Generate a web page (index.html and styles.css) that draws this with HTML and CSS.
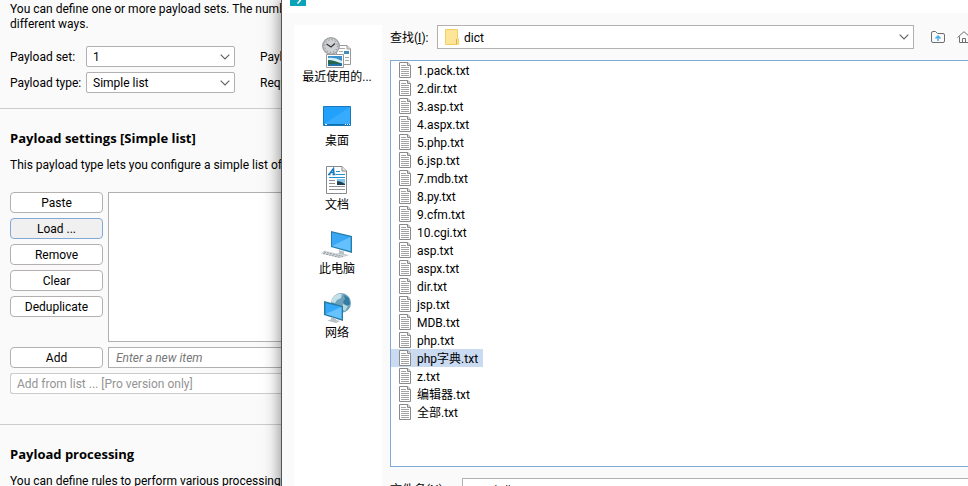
FILE: index.html
```html
<!DOCTYPE html>
<html lang="zh-CN">
<head>
<meta charset="utf-8">
<title>Payloads</title>
<link rel="stylesheet" href="styles.css">
</head>
<body>
<svg class="defs" aria-hidden="true">
  <symbol id="chevron" viewBox="0 0 10 6"><path d="M.7 .7L5 5L9.300 .7" fill="none" stroke="#606060" stroke-width="1.100"/></symbol>
  <symbol id="file" viewBox="0 0 13 16">
    <path d="M.5 .5H9L11.500 3.500V15.500H.5Z" fill="#fff" stroke="#8a8a8a"/>
    <path d="M8.500 .5V3.500H11.500" fill="#ddd" stroke="#8a8a8a"/>
    <path d="M2 3.500H7M2 5.500H10M2 7.500H10M2 9.500H10M2 11.500H10M2 13.500H10" stroke="#a4a4a4"/>
  </symbol>
</svg>
<div class="screen">
  <main class="settings">
    <section class="sets">
      <p class="intro">You can define one or more payload sets. The numb<br>different ways.</p>
      <div class="fields">
        <label for="set">Payload set:</label>
        <div class="combo"><select id="set"><option>1</option></select><svg class="chevron"><use href="#chevron"/></svg></div>
        <span>Payl</span>
        <label for="type">Payload type:</label>
        <div class="combo"><select id="type"><option>Simple list</option></select><svg class="chevron"><use href="#chevron"/></svg></div>
        <span>Requ</span>
      </div>
    </section>
    <section class="simple">
      <h2>Payload settings [Simple list]</h2>
      <p>This payload type lets you configure a simple list of</p>
      <div class="editor">
        <div class="actions">
          <button>Paste</button>
          <button class="focused">Load ...</button>
          <button>Remove</button>
          <button>Clear</button>
          <button>Deduplicate</button>
        </div>
        <textarea aria-label="Payload items"></textarea>
        <button>Add</button>
        <input type="text" placeholder="Enter a new item" aria-label="New item">
        <select class="prolist" aria-label="Add from list" disabled><option>Add from list ... [Pro version only]</option></select>
      </div>
    </section>
    <section class="processing">
      <h2>Payload processing</h2>
      <p>You can define rules to perform various processing t</p>
    </section>
  </main>

  <div class="dialog" role="dialog" aria-label="dict">
    <header class="titlebar">
      <svg class="appicon" viewBox="0 0 16 16"><path d="M0 0H16V16H0Z" fill="#0aa3b8"/><path d="M9 9L10.300 10.500L7.500 13.500" fill="none" stroke="#fff" stroke-width="1.500"/></svg>
    </header>
    <div class="dialog-body">
      <nav class="places">
        <button>
          <svg viewBox="0 0 32 32">
            <path d="M15.500 9.500H26L29.500 13V28.500H15.500Z" fill="#fff" stroke="#999"/>
            <path d="M26 9.500V13H29.500" fill="#ddd" stroke="#999"/>
            <path d="M18 12.500H24M18 15.500H22M18 18.500H22M24 21.500H28M24 24.500H28" stroke="#aaa"/>
            <path d="M23 15H28V18H23Z" fill="#3c8fb8"/>
            <circle cx="10" cy="10" r="8.200" fill="#cfd2d4" stroke="#a2a5a7" stroke-width="1.600"/>
            <circle cx="10" cy="10" r="6.300" fill="none" stroke="#777" stroke-width="1" stroke-dasharray="1 2.300"/>
            <path d="M5.500 8L10 11L14 7.500" fill="none" stroke="#333" stroke-width="1.200"/>
            <path d="M5.500 18.500H22.500V31.500H5.500Z" fill="#fff" stroke="#999"/>
            <path d="M7 20H21V30H7Z" fill="#3a91cf"/>
            <path d="M7 22Q14 21 21 25V27H7Z" fill="#d5eff6"/>
            <path d="M7 24Q13 24 21 28V30H7Z" fill="#24664f"/>
            <path d="M7 28H21V30H7Z" fill="#2471a5"/>
          </svg><span>最近使用的...</span>
        </button>
        <button>
          <svg viewBox="0 0 32 32">
            <path d="M2.500 6.500H29.500V25.500H2.500Z" fill="#21a1fb" stroke="#1878b8"/>
            <path d="M3 24L29 7V24Z" fill="#4db6ff" opacity=".5"/>
            <path d="M3 24.500H29" stroke="#0872bd"/>
            <path d="M4 24.500H6M24 24.500H25M26 24.500H27M28 24.500H29" stroke="#fff"/>
          </svg><span>桌面</span>
        </button>
        <button>
          <svg viewBox="0 0 32 32">
            <path d="M5.500 2.500H21L25.500 7V29.500H5.500Z" fill="#fff" stroke="#858b8f"/>
            <path d="M21 2.500V7H25.500" fill="#e8e8e8" stroke="#858b8f"/>
            <path d="M8 10.500L12.500 4.500L13 10.500M10 8.500H13M7 10.500H9.500M11.500 10.500H14.500" fill="none" stroke="#1979b9" stroke-width="1.500"/>
            <path d="M15 7.500H19M15 10.500H24M8 13.500H24" stroke="#2194cf"/>
            <path d="M8 16.500H14M8 19.500H14M8 22.500H24M8 25.500H24" stroke="#929292"/>
            <path d="M16 15H24V21H16Z" fill="#80c6ed"/>
            <path d="M16 17Q20 17 24 20V21H16Z" fill="#203f51"/>
          </svg><span>文档</span>
        </button>
        <button>
          <svg viewBox="0 0 32 32">
            <path d="M10 3L31 8V25L10 19Z" fill="#277fa8"/>
            <path d="M11 4.500L29.500 9V23L11 18Z" fill="#39a7f4"/>
            <path d="M11 18L29.500 9V23Z" fill="#65c0ff"/>
            <path d="M18 22L23 23.500V26L28 27L24 28.500L14 26L18 25Z" fill="#bac3c9"/>
            <path d="M3 22.500L25 27.500L20 30L0 25.500Z" fill="#d7dbdd"/>
            <path d="M3 24L22 28.500M2 25.500L19 29.500" stroke="#8c969d" stroke-dasharray="2 1"/>
          </svg><span>此电脑</span>
        </button>
        <button>
          <svg viewBox="0 0 32 32">
            <circle cx="20" cy="11" r="10" fill="#6da2ba"/>
            <path d="M12 5Q16 1 21 2L20 6L16 8L14 11L10 10Z" fill="#c3e0e8"/>
            <path d="M23 3L28 6L29 12L25 15L22 10L24 7Z" fill="#347ca4"/>
            <path d="M22 12L27 14L24 19L20 17Z" fill="#b8d8dd"/>
            <path d="M3 9L22 14V29L3 23Z" fill="#277ca4"/>
            <path d="M4.500 11L20.500 15V27L4.500 22Z" fill="#36a8fa"/>
            <path d="M4.500 22L20.500 15V27Z" fill="#68c2ff"/>
            <path d="M10 25L15 26.500V28L19 29L15 31L6 28.500L10 27.500Z" fill="#b8c1c6"/>
          </svg><span>网络</span>
        </button>
      </nav>
      <div class="browser">
        <div class="lookup">
          <label for="folder">查找(<u>I</u>):</label>
          <div class="combo folder">
            <svg class="foldericon" viewBox="0 0 14 16"><path d="M1 0H12V10H13V15L12 16H1Z" fill="#ffe597"/><path d="M.5 .5H12.500V9.500H13.500V15.500H.5Z" fill="none" stroke="#f2ce65"/><path d="M11.500 10V15" stroke="#dbb13d"/></svg>
            <select id="folder"><option>dict</option></select>
            <svg class="chevron"><use href="#chevron"/></svg>
          </div>
          <button aria-label="Up one level"><svg viewBox="0 0 14 12"><path d="M.5 2Q.5 .5 2 .5H4.500L6.500 2.500H12Q13.500 2.500 13.500 4V10Q13.500 11.500 12 11.500H2Q.5 11.500 .5 10Z" fill="none" stroke="#6e6e6e"/><path d="M7 10V5M4.500 7.500L7 5L9.500 7.500" fill="none" stroke="#4aace8" stroke-width="1.500"/></svg></button>
          <button aria-label="Home"><svg viewBox="0 0 14 12"><path d="M.5 6.500L7 .7L13.500 6.500M2.500 5.500V11.500H11.500V5.500M5.500 11V7.500H8.500V11" fill="none" stroke="#6e6e6e"/></svg></button>
        </div>
        <ul class="files">
          <li><button><svg><use href="#file"/></svg><span>1.pack.txt</span></button></li>
          <li><button><svg><use href="#file"/></svg><span>2.dir.txt</span></button></li>
          <li><button><svg><use href="#file"/></svg><span>3.asp.txt</span></button></li>
          <li><button><svg><use href="#file"/></svg><span>4.aspx.txt</span></button></li>
          <li><button><svg><use href="#file"/></svg><span>5.php.txt</span></button></li>
          <li><button><svg><use href="#file"/></svg><span>6.jsp.txt</span></button></li>
          <li><button><svg><use href="#file"/></svg><span>7.mdb.txt</span></button></li>
          <li><button><svg><use href="#file"/></svg><span>8.py.txt</span></button></li>
          <li><button><svg><use href="#file"/></svg><span>9.cfm.txt</span></button></li>
          <li><button><svg><use href="#file"/></svg><span>10.cgi.txt</span></button></li>
          <li><button><svg><use href="#file"/></svg><span>asp.txt</span></button></li>
          <li><button><svg><use href="#file"/></svg><span>aspx.txt</span></button></li>
          <li><button><svg><use href="#file"/></svg><span>dir.txt</span></button></li>
          <li><button><svg><use href="#file"/></svg><span>jsp.txt</span></button></li>
          <li><button><svg><use href="#file"/></svg><span>MDB.txt</span></button></li>
          <li><button><svg><use href="#file"/></svg><span>php.txt</span></button></li>
          <li><button class="selected"><svg><use href="#file"/></svg><span>php字典.txt</span></button></li>
          <li><button><svg><use href="#file"/></svg><span>z.txt</span></button></li>
          <li><button><svg><use href="#file"/></svg><span>编辑器.txt</span></button></li>
          <li><button><svg><use href="#file"/></svg><span>全部.txt</span></button></li>
        </ul>
        <div class="filename">
          <label for="name">文件名(<u>N</u>):</label>
          <input id="name" type="text" value="php字典.txt">
        </div>
      </div>
    </div>
  </div>
</div>
</body>
</html>
```
FILE: styles.css
```css
* { box-sizing: border-box; }

body {
  margin: 0;
  font: 12px/16px Roboto, "Noto Sans CJK SC", sans-serif;
  color: #000;
  background: #fafafa;
}

button, input, select, textarea { font: inherit; color: inherit; margin: 0; }
button { padding: 0; }
h2, p, ul { margin: 0; padding: 0; }
svg { display: block; flex: none; }
.defs { position: absolute; width: 0; height: 0; }

.screen {
  display: grid;
  grid-template-columns: 281px minmax(0, 1fr);
  height: 100vh;
  overflow: hidden;
}

/* Payload settings */
.settings { overflow: hidden; white-space: nowrap; min-width: 0; }
.settings section { padding-left: 10px; }
.settings h2 { font: 700 13px/18px "Open Sans", sans-serif; }
.sets { height: 109px; border-bottom: 1px solid #ccc; }
.intro { line-height: 15px; padding-top: 2px; }
.fields {
  display: grid;
  grid-template-columns: 76px 149px max-content;
  gap: 5px 0;
  align-items: center;
  margin-top: 14px;
}
.fields span { padding-left: 25px; }

.combo { position: relative; }
.combo select {
  display: block;
  width: 100%;
  height: 21px;
  padding: 0 6px;
  appearance: none;
  border: 1px solid #b5b0b0;
  border-radius: 2px;
  background: #fff;
}
.chevron {
  position: absolute;
  right: 5px;
  top: 50%;
  width: 10px;
  height: 6px;
  margin-top: -3px;
  pointer-events: none;
}

.simple { height: 316px; padding-top: 20px; border-bottom: 1px solid #ccc; }
.simple p, .processing p { margin-top: 10px; }
.editor {
  display: grid;
  grid-template-columns: 93px 1fr;
  grid-template-rows: 150px 21px 21px;
  gap: 5px;
  margin-top: 19px;
}
.actions { display: grid; gap: 5px; align-content: start; }
.editor button {
  height: 21px;
  border: 1px solid #b5b0b0;
  border-radius: 4px;
  background: #fff;
}
.editor .focused { background: #f0f0f0; border-color: #82a9d6; }
.editor textarea, .editor input {
  width: 100%;
  min-width: 0;
  border: 1px solid #b0b0b0;
  border-right: 0;
  border-radius: 0;
  background: #fff;
  resize: none;
}
.editor input { padding: 0 7px; }
.editor input::placeholder { color: #777; font-style: italic; opacity: 1; }
.prolist {
  grid-column: 1 / -1;
  min-width: 0;
  padding: 0 6px;
  appearance: none;
  border: 1px solid #ccc;
  border-right: 0;
  border-radius: 3px 0 0 3px;
  background: #fff;
}
.prolist:disabled { color: #949494; opacity: 1; }
.processing { padding-top: 20px; }

/* File dialog */
.dialog {
  position: relative;
  display: flex;
  flex-direction: column;
  min-width: 0;
  background: #fafafa;
  border-left: 1px solid #555;
  box-shadow: 0 0 16px rgba(0, 0, 0, .5);
}
.titlebar { height: 13px; padding-left: 8px; background: #fff; overflow: hidden; }
.appicon { width: 16px; height: 16px; margin-top: -10px; }
.dialog-body {
  display: grid;
  grid-template-columns: 88px minmax(0, 1fr);
  gap: 8px;
  flex: 1;
  padding: 12px 0 0 12px;
}
.places {
  display: flex;
  flex-direction: column;
  gap: 15px;
  padding: 11px 2px 0 0;
  background: #fff;
}
.places button {
  display: flex;
  flex-direction: column;
  align-items: center;
  gap: 1px;
  border: 0;
  background: none;
}
.places svg { width: 32px; height: 32px; }

.browser { min-width: 0; overflow: hidden; }
.lookup { display: flex; align-items: center; white-space: nowrap; }
.lookup label { flex: 0 0 47px; padding-top: 2px; }
.folder { flex: 1; }
.folder select { height: 24px; padding: 2px 6px 0 26px; border-radius: 0; }
.foldericon {
  position: absolute;
  left: 8px;
  top: 4px;
  width: 14px;
  height: 16px;
  pointer-events: none;
}
.lookup button { border: 0; background: none; margin-left: 17px; }
.lookup button svg { width: 14px; height: 12px; }
.lookup button + button { margin: 0 -3px 0 12px; }

.files {
  height: 407px;
  margin-top: 11px;
  list-style: none;
  border: 1px solid #7faad8;
  border-right: 0;
  background: #fff;
}
.files button {
  display: flex;
  align-items: center;
  gap: 5px;
  height: 18px;
  padding: 0 5px 0 8px;
  border: 0;
  background: none;
}
.files span { padding-top: 2px; }
.files svg { width: 13px; height: 16px; }
.files .selected { background: #c9daf1; }

.filename { display: flex; align-items: flex-start; margin-top: 11px; }
.filename label { flex: 0 0 72px; padding-top: 4px; }
.filename input {
  flex: 1;
  min-width: 0;
  height: 24px;
  padding: 0 7px;
  border: 1px solid #b5b0b0;
  border-right: 0;
  background: #fff;
}
```
